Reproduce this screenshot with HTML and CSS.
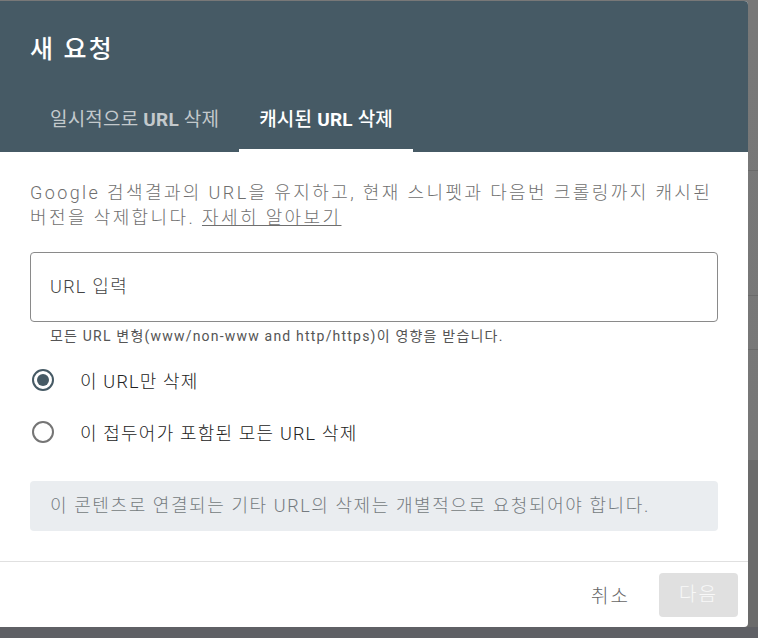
FILE: index.html
```html
<!DOCTYPE html>
<html lang="ko">
<head>
  <meta charset="UTF-8">
  <title>새 요청</title>
  <link rel="stylesheet" href="styles.css">
</head>
<body>
  <div class="backdrop">
    <div class="page-lines">
      <div class="line l1"></div>
      <div class="line l2"></div>
      <div class="line l3"></div>
    </div>
  </div>

  <div class="dialog">
    <div class="dialog-header">
      <h1>새 요청</h1>
      <div class="tabs">
        <div class="tab">일시적으로 <b>URL</b> 삭제</div>
        <div class="tab active">캐시된 <b>URL</b> 삭제</div>
      </div>
    </div>

    <div class="dialog-body">
      <p class="desc">Google 검색결과의 URL을 유지하고, 현재 스니펫과 다음번 크롤링까지 캐시된 버전을 삭제합니다. <a href="#">자세히 알아보기</a></p>

      <div class="field">URL 입력</div>
      <div class="hint">모든 URL 변형(www/non-www and http/https)이 영향을 받습니다.</div>

      <div class="radios">
        <label class="radio checked"><span class="dot"></span>이 URL만 삭제</label>
        <label class="radio"><span class="dot"></span>이 접두어가 포함된 모든 URL 삭제</label>
      </div>

      <div class="note">이 콘텐츠로 연결되는 기타 URL의 삭제는 개별적으로 요청되어야 합니다.</div>
    </div>

    <div class="dialog-footer">
      <span class="btn-text">취소</span>
      <span class="btn-next">다음</span>
    </div>
  </div>
</body>
</html>
```

FILE: styles.css
```css
body {
  margin: 0;
  width: 758px;
  height: 638px;
  overflow: hidden;
  position: relative;
  background: #737373;
  font-family: Roboto, "Noto Sans CJK KR", sans-serif;
}

/* 뒤쪽 페이지 (어둡게 가려진 부분) */
.backdrop {
  position: absolute;
  inset: 0;
  background: linear-gradient(#787878 0, #777 460px, #6b6b6b 460px, #6b6b6b 627px, #5f6065 627px);
}

.page-lines .line {
  position: absolute;
  left: 748px;
  right: 0;
  height: 1px;
  background: #6a6a6a;
}
.l1 { top: 170px; }
.l2 { top: 295px; }
.l3 { top: 349px; }

/* 다이얼로그 */
.dialog {
  position: absolute;
  top: 1px;
  left: 0;
  width: 748px;
  height: 626px;
  background: #fff;
  border-radius: 0 4px 4px 0;
  overflow: hidden;
  display: flex;
  flex-direction: column;
}

.dialog-header {
  background: #465a65;
  padding: 29px 0 0 30px;
  color: #fff;
}

.dialog-header h1 {
  margin: 0 0 20px;
  font-size: 25px;
  font-weight: 500;
  line-height: 40px;
  letter-spacing: 2.2px;
}

.tabs {
  display: flex;
}

.tab {
  padding: 0 20px;
  height: 59px;
  line-height: 60px;
  font-size: 19px;
  letter-spacing: 0.2px;
  color: #c3c9cc;
  border-bottom: 3px solid transparent;
}

.tab b {
  font-weight: 700;
}

.tab.active {
  color: #fff;
  font-weight: 500;
  border-bottom-color: #fff;
}

.dialog-body {
  flex: 1;
  padding: 28px 30px 0;
  border-bottom: 1px solid #e0e0e0;
}

.desc {
  margin: 0;
  font-size: 18px;
  font-weight: 300;
  line-height: 25px;
  letter-spacing: 2.4px;
  color: #6f6f6f;
}

.desc a {
  color: #6f6f6f;
  text-decoration: underline;
}

.field {
  margin-top: 22px;
  height: 68px;
  border: 1px solid #8a8a8a;
  border-radius: 4px;
  padding: 0 19px;
  line-height: 68px;
  font-size: 18px;
  font-weight: 300;
  letter-spacing: 1.3px;
  color: #444;
}

.hint {
  margin-top: 5px;
  padding-left: 20px;
  font-size: 14px;
  line-height: 18px;
  letter-spacing: 1.2px;
  color: #555;
}

.radios {
  margin-top: 22px;
  display: flex;
  flex-direction: column;
  gap: 26px;
}

.radio {
  display: flex;
  align-items: center;
  height: 26px;
  font-size: 18px;
  font-weight: 300;
  letter-spacing: 1.2px;
  color: #222;
}

.radio .dot {
  position: relative;
  width: 22px;
  height: 22px;
  margin: 0 26px 0 2px;
  border: 2px solid #757575;
  border-radius: 50%;
  box-sizing: border-box;
}

.radio.checked .dot {
  border-color: #465a65;
}

.radio.checked .dot::after {
  content: "";
  position: absolute;
  left: 3px;
  top: 3px;
  width: 12px;
  height: 12px;
  border-radius: 50%;
  background: #465a65;
}

.note {
  margin-top: 36px;
  height: 50px;
  line-height: 50px;
  padding: 0 20px;
  background: #eaedf0;
  border-radius: 4px;
  font-size: 18px;
  font-weight: 300;
  letter-spacing: 1.6px;
  color: #757b80;
}

.dialog-footer {
  height: 65px;
  display: flex;
  align-items: center;
  justify-content: flex-end;
  padding-right: 10px;
}

.btn-text {
  font-size: 19px;
  font-weight: 300;
  letter-spacing: 2px;
  color: #666;
  margin-right: 29px;
}

.btn-next {
  width: 79px;
  height: 44px;
  line-height: 44px;
  text-align: center;
  background: #e0e0e0;
  border-radius: 4px;
  font-size: 19px;
  font-weight: 300;
  letter-spacing: 2px;
  color: #f8f8f8;
}
```
